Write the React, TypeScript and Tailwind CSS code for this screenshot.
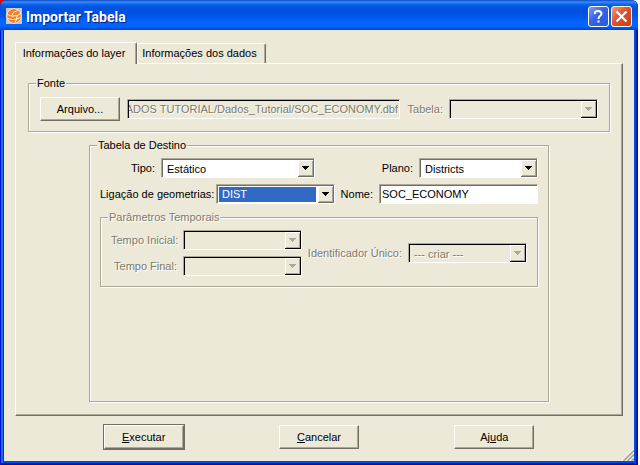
import React from "react";

const SUNKEN =
  "border border-t-[#aca899] border-l-[#aca899] border-r-white border-b-white";
const RAISED =
  "border border-t-white border-l-white border-r-[#716f64] border-b-[#716f64] shadow-[inset_-1px_-1px_0_#aca899]";
const DISABLED = "text-[#7c7a6c] [text-shadow:1px_1px_0_white]";

function Group({
  title,
  disabled = false,
  className = "",
  children,
}: {
  title: string;
  disabled?: boolean;
  className?: string;
  children?: React.ReactNode;
}) {
  return (
    <fieldset
      className={`min-w-0 border border-[#aca899] shadow-[inset_1px_1px_0_white,1px_1px_0_white] ${className}`}
    >
      <legend
        className={`ml-[7px] h-[15px] bg-[#ece9d8] px-px leading-[15px] ${disabled ? DISABLED : ""}`}
      >
        {title}
      </legend>
      <div className="px-[10px]">{children}</div>
    </fieldset>
  );
}

function Label({
  htmlFor,
  disabled = false,
  className = "",
  children,
}: {
  htmlFor: string;
  disabled?: boolean;
  className?: string;
  children: React.ReactNode;
}) {
  return (
    <label
      htmlFor={htmlFor}
      className={`shrink-0 pr-[6px] text-right whitespace-nowrap ${disabled ? DISABLED : ""} ${className}`}
    >
      {children}
    </label>
  );
}

function Combo({
  id,
  value,
  disabled = false,
  active = false,
  className = "w-[119px]",
}: {
  id: string;
  value: string;
  disabled?: boolean;
  active?: boolean;
  className?: string;
}) {
  return (
    <div className={`relative h-5 ${SUNKEN} ${className}`}>
      <div
        className={`h-full border-t border-l ${
          disabled ? "border-black bg-[#ece9d8]" : "border-[#716f64] bg-white"
        } ${active ? "p-px pr-[18px]" : ""}`}
      >
        <select
          id={id}
          disabled={disabled}
          defaultValue={value}
          className={`block h-full w-full appearance-none rounded-none border-0 outline-none ${
            active
              ? "bg-[#316ac5] pl-[3px] leading-[13px] text-white outline-1 -outline-offset-1 outline-dotted outline-[#e0a040]"
              : "bg-transparent pl-1"
          } ${disabled ? "text-[#7c7a6c] opacity-100 [text-shadow:1px_1px_0_white]" : ""}`}
        >
          <option>{value}</option>
        </select>
      </div>
      <span
        className={`pointer-events-none absolute top-px right-0 bottom-0 flex w-4 items-center justify-center border-r border-b bg-[#ece9d8] shadow-[inset_1px_1px_0_white,inset_-1px_-1px_0_#aca899] ${
          disabled ? "border-black" : "border-[#716f64]"
        }`}
      >
        <svg width="7" height="4" shapeRendering="crispEdges" aria-hidden="true">
          <path
            d="M0 0h7v1h-1v1h-1v1h-1v1h-1v-1h-1v-1h-1v-1h-1z"
            fill={disabled ? "#aca899" : "#000"}
          />
        </svg>
      </span>
    </div>
  );
}

function GlobeIcon() {
  return (
    <svg width="16" height="16" viewBox="0 0 16 16" className="shrink-0" aria-hidden="true">
      <rect width="16" height="16" fill="#c6c6c6" />
      <circle cx="8" cy="8" r="7.5" fill="#fff" />
      <circle cx="8" cy="8" r="6.900" fill="#f58220" />
      <g fill="none" stroke="#fff" strokeWidth="0.9">
        <path d="M1 6.500Q6 9.500 11 7.500T14 4.500" />
        <path d="M11.500 2.500Q6.500 3.500 5.500 8" />
        <path d="M2 10.500Q7 13 14.500 9.500" />
        <path d="M11 7.500Q11.500 11 9 14.500" />
      </g>
    </svg>
  );
}

const CAPTION_BUTTON =
  "flex h-[21px] w-[21px] items-center justify-center rounded-[3px] border border-white";

export default function App() {
  return (
    <div className="relative flex min-h-screen flex-col bg-white pr-[2px] font-['Liberation_Sans',Arial,sans-serif] text-[11px] leading-[14px] text-black">
      <span className="absolute top-0 left-0 h-2 w-2 bg-[#e80000]" />
      <div className="relative flex flex-1 flex-col rounded-t-[7px] bg-[#0831d9] px-1 pb-1 shadow-[inset_1px_0_0_#0019cf,inset_-1px_-1px_0_#00138c,inset_-2px_-2px_0_#001ea0,inset_3px_0_0_#166aee,inset_-4px_-4px_0_#0048ea]">
        <header className="-mx-1 flex h-[30px] shrink-0 items-center rounded-t-[7px] bg-[linear-gradient(to_bottom,#0b48c8_0px,#3c8cf8_2px,#1068ec_4px,#0054e0_7px,#0052e0_12px,#0058ee_17px,#0066ff_22px,#0066ff_26px,#0058ea_28px,#0040c8_30px)] pt-[2px] pr-[6px] pl-[6px]">
          <GlobeIcon />
          <h1 className="flex-1 pt-px pl-1 font-['Roboto',sans-serif] text-[14px] leading-[18px] font-bold text-white [text-shadow:1px_1px_1px_#0a1883]">
            Importar Tabela
          </h1>
          <div className="flex gap-[2px]">
            <button
              type="button"
              aria-label="Ajuda da janela"
              className={`${CAPTION_BUTTON} bg-[linear-gradient(135deg,#7f9ff4,#3563e4_45%,#2a5ae8)]`}
            >
              <svg width="11" height="15" viewBox="0 0 11 15" fill="none" stroke="#fff" strokeWidth="2" aria-hidden="true">
                <path d="M2 5V3.500Q2 2 5 2T8.500 4.500Q8.500 6 7 7Q5.500 8 5.500 10" />
                <path d="M5.500 11.500v2" />
              </svg>
            </button>
            <button
              type="button"
              aria-label="Fechar"
              className={`${CAPTION_BUTTON} bg-[linear-gradient(135deg,#f09a80,#e0522c_45%,#cc3c10)]`}
            >
              <svg width="13" height="13" viewBox="0 0 13 13" stroke="#fff" strokeWidth="2.2" aria-hidden="true">
                <path d="M1.500 1.500l10 10M11.500 1.500l-10 10" />
              </svg>
            </button>
          </div>
        </header>

        <main className="relative flex flex-1 flex-col bg-[#ece9d8] px-[11px] pt-3 pb-[11px]">
          <div role="tablist" className="flex items-end">
            <button
              type="button"
              role="tab"
              aria-selected="true"
              className="relative -mb-px h-[22px] w-[122px] rounded-t-[2px] border border-t-white border-r-[#716f64] border-b-0 border-l-white bg-[#ece9d8] pr-1 pb-[2px] shadow-[inset_-1px_0_0_#aca899]"
            >
              Informações do layer
            </button>
            <button
              type="button"
              role="tab"
              aria-selected="false"
              className="h-5 w-[129px] rounded-t-[2px] border border-t-white border-r-[#716f64] border-b-0 border-l-white pr-1 pb-[2px] shadow-[inset_-1px_0_0_#aca899]"
            >
              Informações dos dados
            </button>
          </div>

          <section role="tabpanel" className={`flex flex-1 flex-col px-3 pt-3 pb-[13px] ${RAISED}`}>
            <Group title="Fonte" className="pb-[10px]">
              <div className="flex items-center px-px pt-[6px]">
                <button type="button" className={`h-6 w-20 shrink-0 ${RAISED}`}>
                  Arquivo...
                </button>
                <input
                  aria-label="Caminho do arquivo"
                  disabled
                  dir="rtl"
                  defaultValue="ADOS TUTORIAL/Dados_Tutorial/SOC_ECONOMY.dbf"
                  className={`ml-[7px] h-5 min-w-0 flex-1 bg-[#ece9d8] px-px shadow-[inset_1px_1px_0_black] ${SUNKEN} ${DISABLED}`}
                />
                <Label htmlFor="tabela" disabled className="w-[49px]">
                  Tabela:
                </Label>
                <Combo id="tabela" value="" disabled className="w-[149px]" />
              </div>
            </Group>

            <Group title="Tabela de Destino" className="mx-[61px] mt-[6px] flex-1">
              <div className="flex items-center pt-[5px]">
                <Label htmlFor="tipo" className="w-[61px]">
                  Tipo:
                </Label>
                <Combo id="tipo" value="Estático" className="w-[154px]" />
                <Label htmlFor="plano" className="flex-1">
                  Plano:
                </Label>
                <Combo id="plano" value="Districts" />
              </div>
              <div className="flex items-center pt-[6px]">
                <Label htmlFor="ligacao" className="w-[116px]">
                  Ligação de geometrias:
                </Label>
                <Combo id="ligacao" value="DIST" active />
                <Label htmlFor="nome" className="w-11">
                  Nome:
                </Label>
                <input
                  id="nome"
                  defaultValue="SOC_ECONOMY"
                  className={`h-5 min-w-0 flex-1 bg-white px-[2px] shadow-[inset_1px_1px_0_#716f64] ${SUNKEN}`}
                />
              </div>
              <Group title="Parâmetros Temporais" disabled className="mt-[6px] pb-[10px]">
                <div className="flex items-center pt-[5px]">
                  <div className="flex flex-col gap-[6px]">
                    <div className="flex items-center">
                      <Label htmlFor="inicial" disabled className="w-[72px]">
                        Tempo Inicial:
                      </Label>
                      <Combo id="inicial" value="" disabled />
                    </div>
                    <div className="flex items-center">
                      <Label htmlFor="final" disabled className="w-[72px]">
                        Tempo Final:
                      </Label>
                      <Combo id="final" value="" disabled />
                    </div>
                  </div>
                  <Label htmlFor="identificador" disabled className="flex-1">
                    Identificador Único:
                  </Label>
                  <Combo id="identificador" value="--- criar ---" disabled />
                </div>
              </Group>
            </Group>
          </section>

          <footer className="mx-[41px] mt-2 grid grid-cols-3 place-items-center">
            <button type="button" className="h-[26px] w-[82px] border border-[#716f64] bg-[#716f64]">
              <span className={`flex h-full items-center justify-center bg-[#ece9d8] ${RAISED}`}>
                <u>E</u>xecutar
              </span>
            </button>
            <button type="button" className={`h-6 w-20 ${RAISED}`}>
              <u>C</u>ancelar
            </button>
            <button type="button" className={`h-6 w-20 ${RAISED}`}>
              Aj<u>u</u>da
            </button>
          </footer>

          <svg width="12" height="12" className="absolute right-0 bottom-0" fill="none" aria-hidden="true">
            <path d="M0 12L12 0M4 12L12 4M8 12L12 8" stroke="#fff" strokeWidth="1.200" />
            <path d="M1.500 12L12 1.500M5.500 12L12 5.500M9.500 12L12 9.500" stroke="#aca899" strokeWidth="1.800" />
          </svg>
        </main>
      </div>
    </div>
  );
}
